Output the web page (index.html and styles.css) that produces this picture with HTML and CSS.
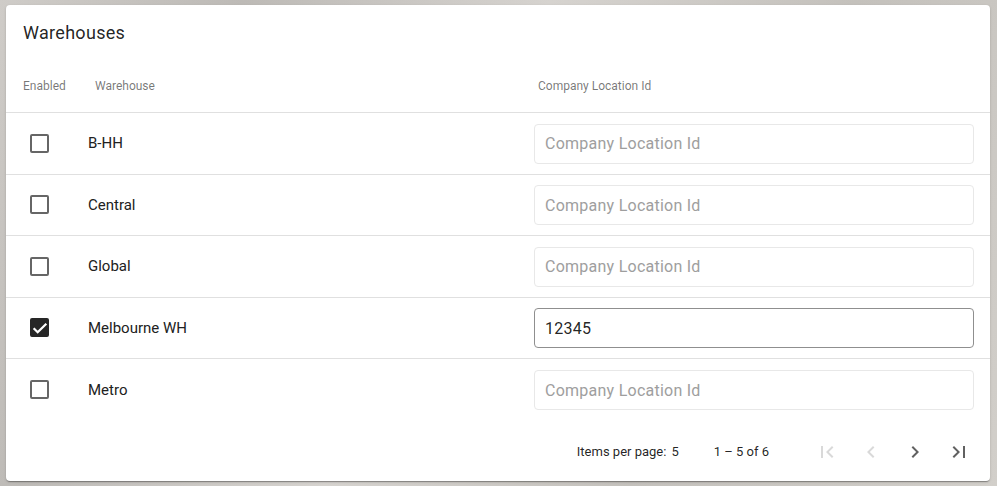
FILE: index.html
```html
<!DOCTYPE html>
<html lang="en">
  <head>
  <meta charset="utf-8">
  <link rel="stylesheet" href="styles.css">
  </head>
  <body>
    <div class="card">
      <h1 class="card-title">Warehouses</h1>
      <div class="table">
        <div class="row head">
          <div class="cell c-enabled">Enabled</div>
          <div class="cell c-name">Warehouse</div>
          <div class="cell c-loc">Company Location Id</div>
        </div>
        <div class="row">
          <div class="cell c-enabled"><span class="check"></span></div>
          <div class="cell c-name">B-HH</div>
          <div class="cell c-loc"><input type="text" placeholder="Company Location Id"></div>
        </div>
        <div class="row">
          <div class="cell c-enabled"><span class="check"></span></div>
          <div class="cell c-name">Central</div>
          <div class="cell c-loc"><input type="text" placeholder="Company Location Id"></div>
        </div>
        <div class="row">
          <div class="cell c-enabled"><span class="check"></span></div>
          <div class="cell c-name">Global</div>
          <div class="cell c-loc"><input type="text" placeholder="Company Location Id"></div>
        </div>
        <div class="row">
          <div class="cell c-enabled">
            <span class="check on">
              <svg viewBox="0 0 24 24" width="16" height="16"><path d="M2.5 12.4l6 6L21.5 5.6" fill="none" stroke="#fff" stroke-width="3.4"/></svg>
            </span>
          </div>
          <div class="cell c-name">Melbourne WH</div>
          <div class="cell c-loc"><input type="text" class="filled" value="12345" placeholder="Company Location Id"></div>
        </div>
        <div class="row last">
          <div class="cell c-enabled"><span class="check"></span></div>
          <div class="cell c-name">Metro</div>
          <div class="cell c-loc"><input type="text" placeholder="Company Location Id"></div>
        </div>
      </div>
      <div class="paginator">
        <span class="per-page">Items per page:</span>
        <span class="per-page-val">5</span>
        <span class="range">1 – 5 of 6</span>
        <button class="pg off"><svg viewBox="0 0 24 24" width="24" height="24"><path d="M18.41 16.59L13.82 12l4.59-4.590L17 6l-6 6 6 6zM6 6h2v12H6z"/></svg></button>
        <button class="pg off"><svg viewBox="0 0 24 24" width="24" height="24"><path d="M15.41 7.41L14 6l-6 6 6 6 1.41-1.41L10.83 12z"/></svg></button>
        <button class="pg"><svg viewBox="0 0 24 24" width="24" height="24"><path d="M10 6L8.59 7.41 13.17 12l-4.58 4.59L10 18l6-6z"/></svg></button>
        <button class="pg"><svg viewBox="0 0 24 24" width="24" height="24"><path d="M5.59 7.41L10.18 12l-4.59 4.59L7 18l6-6-6-6zM16 6h2v12h-2z"/></svg></button>
      </div>
    </div>
  </body>
</html>
```

FILE: styles.css
```css
html, body { height: 100%; margin: 0; padding: 0; }
body {
  font-family: Roboto, "Helvetica Neue", sans-serif;
  color: rgba(0, 0, 0, .87);
  background: linear-gradient(115deg, #cfccc8 0%, #bdbab6 20%, #d6d3cf 45%, #c4c1bc 70%, #d2cfca 100%);
  padding: 5px 7px 5px 6px;
  box-sizing: border-box;
}
.card {
  background: #fff; border-radius: 4px;
  box-shadow: 0 2px 1px -1px rgba(0,0,0,.2), 0 1px 1px 0 rgba(0,0,0,.14), 0 1px 3px 0 rgba(0,0,0,.12);
  height: 476px; box-sizing: border-box;
}
.card-title {
  margin: 0; padding: 16px 16px 0 17px; height: 51px; box-sizing: border-box;
  font-size: 18px; font-weight: 400; line-height: 24px; letter-spacing: 0.3px; color: rgba(0,0,0,.87);
}
.row { display: flex; align-items: center; height: 61.5px; border-bottom: 1px solid #e0e0e0; box-sizing: border-box; }
.row.head { height: 57px; font-size: 12px; color: rgba(0,0,0,.54); padding-top: 4px; }
.row.last { border-bottom: none; }
.cell { font-size: 15px; box-sizing: border-box; color: #212121; }
.head .cell { font-size: 12px; color: rgba(0,0,0,.54); }
.c-enabled { width: 82px; padding-left: 17px; flex: none; }
.c-name { width: 446px; flex: none; }
.head .c-name { padding-left: 7px; }
.c-loc { flex: 1; padding-right: 16px; }
.head .c-loc { padding-left: 4px; }
.check {
  display: block; width: 19px; height: 19px; box-sizing: border-box; margin-left: 7px;
  border: 2px solid rgba(0,0,0,.6); border-radius: 2px;
}
.check.on { background: #262626; border-color: #262626; position: relative; }
.check.on svg { position: absolute; left: 0; top: 0; }
input[type=text] {
  display: block; width: 100%; height: 40px; box-sizing: border-box; margin-top: 1px;
  border: 1px solid #e8e8e8; border-radius: 4px; padding: 0 10px;
  font: 16px Roboto, sans-serif; letter-spacing: 0.25px; color: rgba(0,0,0,.87); background: #fff;
}
input::placeholder { color: #9e9e9e; }
input.filled { border-color: #8f8f8f; }
.paginator {
  display: flex; align-items: center; justify-content: flex-end;
  height: 61px; padding: 1px 11px 0 0; box-sizing: border-box; font-size: 13px; color: rgba(0,0,0,.87);
}
.per-page-val { margin-left: 5px; }
.range { margin: 0 34px 0 35px; }
.pg {
  width: 40px; height: 40px; margin-left: 4px; padding: 0; border: none; background: none;
  display: flex; align-items: center; justify-content: center; fill: #616161;
}
.pg.off { fill: #d9d9d9; }
```
